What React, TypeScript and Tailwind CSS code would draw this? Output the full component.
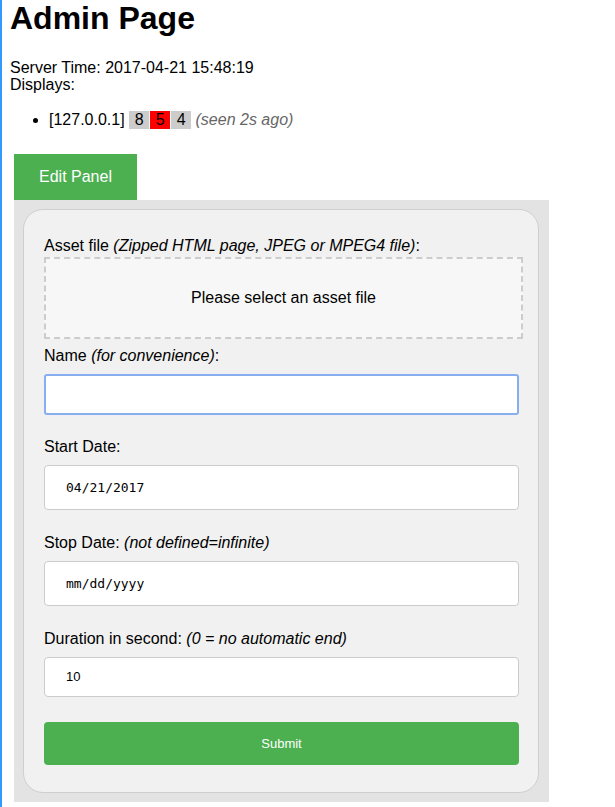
import React from "react";

export default function App() {
  return (
    <div className="min-h-[807px] border-l-2 border-[#3399ff] pl-2 font-['Liberation_Sans',Arial,sans-serif] text-[16px] text-black">
      <h1 className="text-[32px] font-bold leading-[37px]">Admin Page</h1>
      <div className="mt-[22px] leading-[17px]">
        <div>Server Time: 2017-04-21 15:48:19</div>
        <div>Displays:</div>
      </div>
      <ul className="mt-[18px] list-disc pl-[39px]">
        <li className="leading-[18px]">
          [127.0.0.1]{" "}
          <span className="inline-block w-[20px] bg-[#cccccc] text-center">8</span>
          <span className="ml-px inline-block w-[20px] bg-[#ff0000] text-center">5</span>
          <span className="ml-px inline-block w-[20px] bg-[#cccccc] text-center">4</span>{" "}
          <span className="italic text-[#666666]">(seen 2s ago)</span>
        </li>
      </ul>
      <div className="ml-1 mt-[25px] flex h-[46px] w-[123px] items-center bg-[#4caf50] pl-[25px] text-white">
        Edit Panel
      </div>
      <div className="ml-1 w-[535px] bg-[#e3e3e3] pb-[9px] pl-[9px] pr-[10px] pt-[9px]">
        <div className="rounded-[20px] border border-[#cfcfcf] bg-[#f1f1f1] pb-[27px] pl-[20px] pr-[19px] pt-[27px]">
          <div className="leading-[18px]">
            Asset file <i>(Zipped HTML page, JPEG or MPEG4 file)</i>:
          </div>
          <div className="mt-[2px] flex h-[82px] w-[calc(100%+4px)] items-center justify-center border-2 border-dashed border-[#cccccc] bg-[#f7f7f7]">
            Please select an asset file
          </div>
          <div className="mt-[8px] leading-[18px]">
            Name <i>(for convenience)</i>:
          </div>
          <div className="mt-[9px] h-[41px] rounded-[3px] border-2 border-[#88aef0] bg-white"></div>

          <div className="mt-[23px] leading-[18px]">Start Date:</div>
          <div className="mt-[9px] flex h-[45px] items-center rounded-[4px] border border-[#cccccc] bg-white pl-[21px] font-['DejaVu_Sans_Mono',monospace] text-[13px]">
            04/21/2017
          </div>

          <div className="mt-[24px] leading-[18px]">
            Stop Date: <i>(not defined=infinite)</i>
          </div>
          <div className="mt-[9px] flex h-[45px] items-center rounded-[4px] border border-[#cccccc] bg-white pl-[21px] font-['DejaVu_Sans_Mono',monospace] text-[13px]">
            mm/dd/yyyy
          </div>

          <div className="mt-[24px] leading-[18px]">
            Duration in second: <i>(0 = no automatic end)</i>
          </div>
          <div className="mt-[9px] flex h-[40px] items-center rounded-[4px] border border-[#cccccc] bg-white pl-[21px] text-[13px]">
            10
          </div>

          <div className="mt-[25px] flex h-[43px] items-center justify-center rounded-[4px] bg-[#4caf50] text-[13px] text-white">
            Submit
          </div>
        </div>
      </div>
    </div>
  );
}
